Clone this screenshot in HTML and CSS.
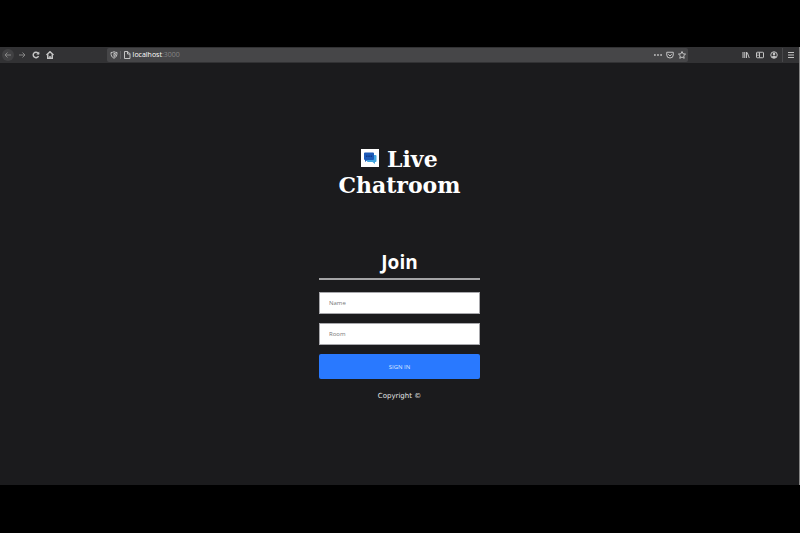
FILE: index.html
```html
<!DOCTYPE html>
<html lang="en">
<head>
<meta charset="utf-8">
<meta name="viewport" content="width=device-width, initial-scale=1">
<title>Live Chatroom</title>
<link rel="stylesheet" href="styles.css">
</head>
<body>
<div class="window">
  <header class="toolbar">
    <nav class="nav" aria-label="Navigation">
      <button class="tool back" type="button" aria-label="Back"><svg class="icon" viewBox="0 0 16 16"><path d="M14 8H2M7 3L2 8l5 5"/></svg></button>
      <button class="tool dim" type="button" aria-label="Forward"><svg class="icon" viewBox="0 0 16 16"><path d="M2 8h12M9 3l5 5-5 5"/></svg></button>
      <button class="tool" type="button" aria-label="Reload"><svg class="icon bold" viewBox="0 0 16 16"><path d="M13 10a5.500 5.500 0 1 1-1-6l2 2"/><path d="M14.500 1v6h-6z" class="solid"/></svg></button>
      <button class="tool" type="button" aria-label="Home"><svg class="icon bold" viewBox="0 0 16 16"><path d="M1 8l7-6.500L15 8M3.500 7v7.500h9V7M8 14v-4"/></svg></button>
    </nav>
    <div class="address">
      <svg class="icon" viewBox="0 0 16 16"><path d="M8 1.500c2 1 4 1.500 6 1.500 0 6-1 9-6 11.500C3 12 2 9 2 3c2 0 4-.5 6-1.500zM8 4.500v7c2-1.500 3-3 3-6z"/></svg>
      <span class="divider"></span>
      <svg class="icon page-icon" viewBox="0 0 16 16"><path d="M3 1h6.500L14 5.500V15H3zM9 1v5h5"/></svg>
      <span class="url">localhost<span class="port">:3000</span></span>
      <button class="tool" type="button" aria-label="Page actions"><svg class="icon" viewBox="0 0 16 16"><path class="solid" d="M0 6.500h3.500v3H0zM6.250 6.500h3.500v3h-3.500zM12.500 6.500H16v3h-3.500z"/></svg></button>
      <button class="tool" type="button" aria-label="Save to Pocket"><svg class="icon" viewBox="0 0 16 16"><path d="M1.500 2.500h13V8a6.500 6 0 0 1-13 0zM4.500 6.500L8 10l3.500-3.500"/></svg></button>
      <button class="tool" type="button" aria-label="Bookmark"><svg class="icon" viewBox="0 0 16 16"><path d="M8 1l2.100 4.600 5 .6-3.700 3.400 1 5L8 12.100l-4.400 2.500 1-5L.9 6.200l5-.6z"/></svg></button>
    </div>
    <div class="extras">
      <button class="tool" type="button" aria-label="Library"><svg class="icon" viewBox="0 0 16 16"><path d="M2 2v12M5.500 2v12M9 2v12M10.500 3l4 11"/></svg></button>
      <button class="tool" type="button" aria-label="Sidebars"><svg class="icon" viewBox="0 0 16 16"><rect x="1" y="2.500" width="14" height="11" rx="1.500"/><path d="M7 3v10M3 6h2M3 9h2"/></svg></button>
      <button class="tool" type="button" aria-label="Account"><svg class="icon" viewBox="0 0 16 16"><circle cx="8" cy="8" r="6.500"/><path class="solid" d="M5.500 5.500a2.500 2.500 0 0 1 5 0C10.500 8 9.500 9 8 9S5.500 8 5.500 5.500zM3 12c1-2.500 9-2.500 10 0-2 3-8 3-10 0z"/></svg></button>
      <span class="rule"></span>
      <button class="tool" type="button" aria-label="Menu"><svg class="icon" viewBox="0 0 16 16"><path d="M2 3h12M2 8h12M2 13h12"/></svg></button>
    </div>
  </header>
  <main class="content">
    <h1 class="title"><svg class="logo" viewBox="0 0 18 18" role="img" aria-label="Chat"><path fill="#fff" d="M0 0h18v18H0z"/><path fill="#42a5df" d="M7 6h7.500q1 0 1 1v5q0 1-1 1H14v2l-2.500-2H7q-1 0-1-1V7q0-1 1-1z"/><path fill="#1e5bb8" d="M4 3.500h8q1 0 1 1V10q0 1-1 1H6.500L4 13v-2q-1 0-1-1V4.500q0-1 1-1z"/><path fill="#123b87" d="M5 6.500h1.500V8H5zM7.300 6.500h1.500V8H7.300zM9.600 6.500h1.500V8H9.600z"/></svg> Live Chatroom</h1>
    <form class="join">
      <h2 class="heading">Join</h2>
      <input class="field" type="text" placeholder="Name" aria-label="Name">
      <input class="field" type="text" placeholder="Room" aria-label="Room">
      <button class="submit" type="submit">SIGN IN</button>
    </form>
    <footer class="copyright">Copyright ©</footer>
  </main>
</div>
</body>
</html>
```
FILE: styles.css
```css
* {
  box-sizing: border-box;
}

body {
  margin: 0;
  min-height: 100vh;
  padding: 47px 0 48px;
  display: flex;
  background: #000;
  color: #fff;
  font-family: "Open Sans", sans-serif;
}

.window {
  flex: 1;
  display: flex;
  flex-direction: column;
  background: #1b1b1d;
  border-right: 1px solid #858585;
}

.toolbar {
  display: flex;
  align-items: center;
  height: 16px;
  padding: 0 2px;
  background: #323234;
  color: #c4c4c4;
}

.nav {
  flex: 105;
  display: flex;
  gap: 2px;
}

.tool {
  display: flex;
  align-items: center;
  justify-content: center;
  width: 12px;
  height: 12px;
  padding: 0;
  border: 0;
  background: none;
  color: inherit;
}

.back {
  border-radius: 50%;
  background: #414143;
  color: #858585;
}

.dim {
  color: #858585;
}

.icon {
  flex: none;
  width: 8px;
  height: 8px;
  fill: none;
  stroke: currentColor;
  stroke-width: 2;
}

.bold {
  stroke-width: 3;
}

.solid {
  fill: currentColor;
  stroke: none;
}

.address {
  flex: 581;
  display: flex;
  align-items: center;
  height: 14px;
  padding: 0 0 0 3px;
  border-radius: 2px;
  background: #464648;
}

.divider {
  height: 8px;
  margin: 0 2px;
  border-left: 1px solid #606062;
}

.url {
  flex: 1;
  margin-left: 2px;
  color: #fff;
  font-size: 7px;
  line-height: 12px;
}

.port {
  color: #858585;
}

.extras {
  flex: 109;
  display: flex;
  align-items: center;
  justify-content: flex-end;
  gap: 2px;
}

.rule {
  height: 14px;
  border-left: 1px solid #48484a;
}

.content {
  width: 20%;
  min-width: 161px;
  margin: 0 auto;
  padding-top: 83px;
  text-align: center;
}

.title {
  margin: 0;
  font: bold 22px/26px "DejaVu Serif", serif;
}

.logo {
  width: 18px;
  height: 18px;
}

.join {
  display: flex;
  flex-direction: column;
  gap: 9px;
  margin-top: 49px;
}

.heading {
  margin: 0 0 3px;
  border-bottom: 2px solid #a4a4a6;
  font-size: 19px;
  line-height: 31px;
}

.field {
  width: 100%;
  height: 22px;
  padding: 0 9px;
  border: 1px solid #a8a8ac;
  border-radius: 0;
  background: #fff;
  color: #333;
  font: 6px "Open Sans", sans-serif;
}

.field::placeholder {
  color: #777;
  opacity: 1;
}

.submit {
  height: 25px;
  padding: 0;
  border: 0;
  border-radius: 2px;
  background: #2979ff;
  color: #dce8ff;
  font: 6px "Open Sans", sans-serif;
}

.copyright {
  margin-top: 11px;
  color: #e4e4e4;
  font: 7px/12px "DejaVu Sans", sans-serif;
}
```
